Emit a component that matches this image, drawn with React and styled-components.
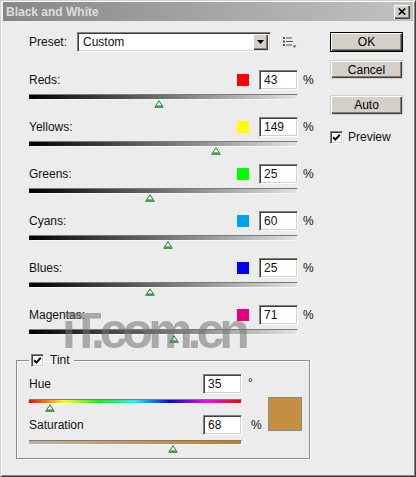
import React from "react";
import styled, { createGlobalStyle } from "styled-components";

const GlobalStyle = createGlobalStyle`
  body {
    margin: 0;
    background: #ececec;
  }
`;

const Window = styled.div`
  position: relative;
  width: 416px;
  height: 477px;
  box-sizing: border-box;
  display: flex;
  flex-direction: column;
  padding: 1px 2px 2px 2px;
  background: #ececec;
  border: 1px solid;
  border-color: #d4d0c8 #404040 #404040 #d4d0c8;
  box-shadow: inset 1px 1px #fff, inset -1px -1px #808080;
  font-family: "Liberation Sans", Arial, sans-serif;
  font-size: 12px;
  color: #111;
  overflow: hidden;
`;

const TitleBar = styled.div`
  height: 19px;
  display: flex;
  align-items: center;
  justify-content: space-between;
  padding: 0 3px 0 3px;
  background: linear-gradient(to right, #878787, #c2c2c2);
`;

const Title = styled.span`
  font-weight: bold;
  font-size: 12px;
  color: #dedede;
`;

const CloseBtn = styled.div`
  width: 16px;
  height: 14px;
  box-sizing: border-box;
  display: flex;
  align-items: center;
  justify-content: center;
  background: #d4d0c8;
  box-shadow: inset 1px 1px #fff, inset -1px -1px #404040, inset -2px -2px #808080;
`;

const Body = styled.div`
  display: flex;
  padding: 11px 0 0 13px;
`;

const LeftCol = styled.div`
  width: 304px;
  display: flex;
  flex-direction: column;
`;

const RightCol = styled.div`
  width: 73px;
  margin-left: 10px;
  display: flex;
  flex-direction: column;
`;

const PresetRow = styled.div`
  margin-left: 13px;
  height: 20px;
  display: flex;
  align-items: center;
`;

const PresetLabel = styled.span`
  width: 48px;
`;

const Select = styled.div`
  width: 194px;
  height: 20px;
  box-sizing: border-box;
  display: flex;
  align-items: center;
  justify-content: space-between;
  padding: 2px 2px 2px 5px;
  background: #fff;
  border: 1px solid;
  border-color: #808080 #fff #fff #808080;
  box-shadow: inset 1px 1px #404040, inset -1px -1px #d4d0c8;
`;

const DropBtn = styled.div`
  width: 15px;
  height: 16px;
  display: flex;
  align-items: center;
  justify-content: center;
  background: #d4d0c8;
  box-shadow: inset 1px 1px #fff, inset -1px -1px #404040, inset -2px -2px #808080;
`;

const OptionsIcon = styled.svg`
  margin-left: 12px;
`;

const Sliders = styled.div`
  margin-top: 18px;
  display: flex;
  flex-direction: column;
`;

const SliderRow = styled.div`
  margin-left: ${(p) => p.$indent}px;
  height: ${(p) => p.$height}px;
  display: flex;
  flex-direction: column;
`;

const RowHeader = styled.div`
  width: ${(p) => p.$width}px;
  height: 20px;
  display: flex;
  align-items: center;
`;

const RowLabel = styled.span`
  flex: 1;
`;

const Swatch = styled.span`
  width: 12px;
  height: 12px;
  margin-right: 10px;
  background: ${(p) => p.$color};
`;

const NumBox = styled.div`
  width: 39px;
  height: 20px;
  box-sizing: border-box;
  padding: 0 4px;
  display: flex;
  align-items: center;
  background: #fff;
  border: 1px solid;
  border-color: #808080 #fff #fff #808080;
  box-shadow: inset 1px 1px #404040, inset -1px -1px #d4d0c8;
`;

const Unit = styled.span`
  width: ${(p) => p.$width}px;
  box-sizing: border-box;
  padding-left: ${(p) => p.$pad}px;
  align-self: ${(p) => (p.$raised ? "flex-start" : "center")};
  margin-top: ${(p) => (p.$raised ? "2px" : "0")};
`;

const Track = styled.div`
  position: relative;
  width: ${(p) => p.$width}px;
  height: ${(p) => p.$height}px;
  margin-top: ${(p) => p.$gap}px;
  box-sizing: border-box;
  background: ${(p) => p.$bg};
  border-top: 1px solid #7a7a7a;
  border-right: 1px solid #f6f6f6;
  border-bottom: 1px solid #f6f6f6;
`;

const Thumb = styled.svg`
  position: absolute;
  top: calc(100% + 1px);
  transform: translateX(-50%);
`;

const TintGroup = styled.fieldset`
  width: 294px;
  box-sizing: border-box;
  margin: 1px 0 0 0;
  padding: 7px 7px 5px 12px;
  border: 1px solid #8c8c8c;
  box-shadow: 1px 1px 0 #fff, inset 1px 1px 0 #fff;
`;

const TintLegend = styled.legend`
  display: flex;
  align-items: center;
  gap: 6px;
  height: 14px;
  padding: 0 4px 0 2px;
`;

const TintBody = styled.div`
  display: flex;
  align-items: center;
`;

const TintSliders = styled.div`
  display: flex;
  flex-direction: column;
  gap: 3px;
`;

const ColorChip = styled.div`
  width: 34px;
  height: 34px;
  margin-left: 6px;
  box-sizing: border-box;
  background: ${(p) => p.$color};
  border: 1px solid #8a8a8a;
`;

const Button = styled.div`
  height: ${(p) => p.$height}px;
  margin-top: ${(p) => p.$top}px;
  box-sizing: border-box;
  display: flex;
  align-items: center;
  justify-content: center;
  font-size: 12px;
  color: #000;
  background: #d4d0c8;
  border: 1px solid ${(p) => (p.$default ? "#000" : "#d4d0c8")};
  box-shadow: inset 1px 1px #fff, inset -1px -1px #404040, inset -2px -2px #808080;
`;

const CheckRow = styled.div`
  display: flex;
  align-items: center;
  gap: 5px;
  margin-top: ${(p) => p.$top}px;
`;

const CheckBox = styled.span`
  width: 13px;
  height: 13px;
  box-sizing: border-box;
  display: flex;
  align-items: center;
  justify-content: center;
  background: #fff;
  border: 1px solid;
  border-color: #808080 #fff #fff #808080;
  box-shadow: inset 1px 1px #404040, inset -1px -1px #d4d0c8;
`;

// site watermark stamped over the screenshot
const Watermark = styled.div`
  position: absolute;
  left: 61px;
  top: 305px;
  font-family: "Liberation Sans", Arial, sans-serif;
  font-weight: bold;
  font-size: 50px;
  line-height: 1;
  letter-spacing: -5px;
  color: rgba(115, 115, 115, 0.55);
  pointer-events: none;
`;

const GRAY = "linear-gradient(to right, #000, #e2e2e2)";
const HUE = "linear-gradient(to right, #f00, #ff0, #0f0, #0ff, #00f, #f0f, #f00)";
const SAT = "linear-gradient(to right, #bdb4aa, #c67c1c)";

const channels = [
  { label: "Reds:", value: 43, color: "#ff0000" },
  { label: "Yellows:", value: 149, color: "#ffff00" },
  { label: "Greens:", value: 25, color: "#00ff00" },
  { label: "Cyans:", value: 60, color: "#00a2e8" },
  { label: "Blues:", value: 25, color: "#0000ff" },
  { label: "Magentas:", value: 71, color: "#e4007f" },
];

const ThumbIcon = ({ pos }) => (
  <Thumb width="10" height="8" viewBox="0 0 10 8" style={{ left: `${pos}%` }}>
    <path d="M5 0.8 L9.3 7.3 H0.7 Z" fill="#f6fbf6" stroke="#2f7a3a" strokeWidth="1" />
    <rect x="1.5" y="5.3" width="7" height="2" fill="#3fa04f" />
  </Thumb>
);

const Check = () => (
  <CheckBox>
    <svg width="9" height="9" viewBox="0 0 9 9">
      <polyline points="1.2,4.2 3.4,6.6 7.8,1.8" fill="none" stroke="#000" strokeWidth="2" />
    </svg>
  </CheckBox>
);

const ChannelSlider = ({ label, value, color }) => (
  <SliderRow $indent={13} $height={47}>
    <RowHeader $width={287}>
      <RowLabel>{label}</RowLabel>
      <Swatch $color={color} />
      <NumBox>{value}</NumBox>
      <Unit $width={18} $pad={5}>%</Unit>
    </RowHeader>
    <Track $width={269} $height={6} $gap={4} $bg={GRAY}>
      <ThumbIcon pos={((value + 200) / 500) * 100} />
    </Track>
  </SliderRow>
);

const TintSlider = ({ label, value, unit, raised, pos, bg }) => (
  <SliderRow $indent={0} $height={38}>
    <RowHeader $width={233}>
      <RowLabel>{label}</RowLabel>
      <NumBox>{value}</NumBox>
      <Unit $width={20} $pad={raised ? 6 : 9} $raised={raised}>{unit}</Unit>
    </RowHeader>
    <Track $width={213} $height={5} $gap={5} $bg={bg}>
      <ThumbIcon pos={pos} />
    </Track>
  </SliderRow>
);

export default function App() {
  return (
    <Window>
      <GlobalStyle />
      <TitleBar>
        <Title>Black and White</Title>
        <CloseBtn>
          <svg width="8" height="7" viewBox="0 0 8 7">
            <path d="M0.8 0.5 L7.2 6.5 M7.2 0.5 L0.8 6.5" stroke="#000" strokeWidth="1.7" />
          </svg>
        </CloseBtn>
      </TitleBar>
      <Body>
        <LeftCol>
          <PresetRow>
            <PresetLabel>Preset:</PresetLabel>
            <Select>
              <span>Custom</span>
              <DropBtn>
                <svg width="7" height="4" viewBox="0 0 7 4">
                  <polygon points="0,0 7,0 3.5,4" fill="#000" />
                </svg>
              </DropBtn>
            </Select>
            <OptionsIcon width="14" height="11" viewBox="0 0 14 11">
              <rect x="0" y="0" width="2" height="2" fill="#555" />
              <rect x="3" y="0.5" width="6" height="1" fill="#555" />
              <rect x="0" y="3.5" width="2" height="2" fill="#555" />
              <rect x="3" y="4" width="7" height="1" fill="#555" />
              <rect x="0" y="7" width="2" height="2" fill="#555" />
              <rect x="3" y="7.5" width="6" height="1" fill="#555" />
              <polygon points="9.5,8.5 13.5,8.5 11.5,10.8" fill="#555" />
            </OptionsIcon>
          </PresetRow>
          <Sliders>
            {channels.map((c) => (
              <ChannelSlider key={c.label} {...c} />
            ))}
          </Sliders>
          <TintGroup>
            <TintLegend>
              <Check />
              <span>Tint</span>
            </TintLegend>
            <TintBody>
              <TintSliders>
                <TintSlider label="Hue" value={35} unit="°" raised pos={(35 / 359) * 100} bg={HUE} />
                <TintSlider label="Saturation" value={68} unit="%" pos={68} bg={SAT} />
              </TintSliders>
              <ColorChip $color="#c58f42" />
            </TintBody>
          </TintGroup>
        </LeftCol>
        <RightCol>
          <Button $default $height={20} $top={0}>OK</Button>
          <Button $height={19} $top={8}>Cancel</Button>
          <Button $height={20} $top={16}>Auto</Button>
          <CheckRow $top={15}>
            <Check />
            <span>Preview</span>
          </CheckRow>
        </RightCol>
      </Body>
      <Watermark>iT.com.cn</Watermark>
    </Window>
  );
}
